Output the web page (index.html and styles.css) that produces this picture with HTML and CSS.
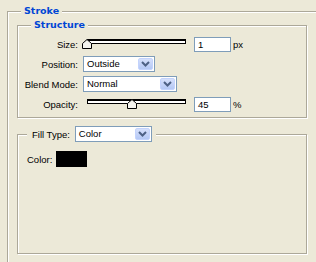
FILE: index.html
```html
<!DOCTYPE html>
<html>
<head>
<meta charset="utf-8">
<link rel="stylesheet" href="styles.css">
</head>
<body>
<fieldset class="grp outer">
  <legend class="title">Stroke</legend>
  <fieldset class="grp inner">
    <legend class="title">Structure</legend>
    <div class="row">
      <span class="lbl">Size:</span>
      <div class="slider"><span class="track"></span><svg class="thumb" style="left:0px" width="10" height="10" viewBox="0 0 10 10"><path d="M0.5 9.5 V4.5 L5 0.5 L9.5 4.5 V9.5 Z" fill="#f4f3ee" stroke="#000"/></svg></div>
      <span class="num">1</span>
      <span class="unit">px</span>
    </div>
    <div class="row">
      <span class="lbl">Position:</span>
      <span class="select sel-pos"><span class="val">Outside</span><span class="btn"><svg width="9" height="6" viewBox="0 0 9 6"><polyline points="1,1 4.5,4.5 8,1" fill="none" stroke="#4d6185" stroke-width="2"/></svg></span></span>
    </div>
    <div class="row">
      <span class="lbl">Blend Mode:</span>
      <span class="select sel-blend"><span class="val">Normal</span><span class="btn"><svg width="9" height="6" viewBox="0 0 9 6"><polyline points="1,1 4.5,4.5 8,1" fill="none" stroke="#4d6185" stroke-width="2"/></svg></span></span>
    </div>
    <div class="row">
      <span class="lbl">Opacity:</span>
      <div class="slider"><span class="track"></span><svg class="thumb" style="left:44.5px" width="10" height="10" viewBox="0 0 10 10"><path d="M0.5 9.5 V4.5 L5 0.5 L9.5 4.5 V9.5 Z" fill="#f4f3ee" stroke="#000"/></svg></div>
      <span class="num">45</span>
      <span class="unit">%</span>
    </div>
  </fieldset>
  <fieldset class="grp inner fill">
    <legend class="fill-legend"><span class="fl-wrap"><span class="fl-lbl">Fill Type:</span><span class="select sel-fill"><span class="val">Color</span><span class="btn"><svg width="9" height="6" viewBox="0 0 9 6"><polyline points="1,1 4.5,4.5 8,1" fill="none" stroke="#4d6185" stroke-width="2"/></svg></span></span></span></legend>
    <div class="fill-body">
      <div class="color-row"><span>Color:</span><span class="swatch"></span></div>
    </div>
  </fieldset>
</fieldset>
</body>
</html>
```
FILE: styles.css
```css
html, body {
  margin: 0;
  padding: 0;
  overflow: hidden;
}
body {
  width: 316px;
  height: 262px;
  background: #ece9d8;
  font-family: "Liberation Sans", Arial, sans-serif;
  font-size: 9.5px;
  color: #000;
}
.grp {
  margin: 0;
  padding: 0;
  min-width: 0;
  border: 1px solid #aca899;
  box-shadow: inset 1px 1px 0 #fff, 1px 1px 0 #fff;
  box-sizing: border-box;
}
.outer {
  margin: 5px 0 0 7px;
  width: 309px;
  height: 257px;
  border-right: none;
  border-bottom: none;
  box-shadow: inset 1px 1px 0 #fff;
}
.title {
  margin-left: 13px;
  padding: 0 3px;
  background: #ece9d8;
  font-family: "DejaVu Sans", sans-serif;
  font-weight: bold;
  font-size: 9.5px;
  line-height: 12px;
  color: #0046d5;
}
.inner {
  margin: 2px 0 0 9px;
  width: 290px;
  padding: 3px 0 3px 0;
}
.row {
  display: flex;
  align-items: center;
  height: 20px;
}
.lbl {
  width: 60px;
  text-align: right;
  flex: none;
}
.slider {
  position: relative;
  width: 109px;
  height: 20px;
  margin-left: 4px;
  flex: none;
}
.track {
  display: block;
  margin: 5px 5px 0 5px;
  height: 2px;
  border: 1px solid #000;
  border-top-width: 2px;
  background: #fff;
}
.thumb {
  position: absolute;
  top: 5px;
  display: block;
}
.num {
  margin-left: 3px;
  width: 37px;
  height: 15px;
  box-sizing: border-box;
  border: 1px solid #7f9db9;
  background: #fff;
  padding-left: 3px;
  line-height: 13px;
  flex: none;
}
.unit {
  margin-left: 2px;
}
.select {
  display: flex;
  align-items: center;
  height: 16px;
  box-sizing: border-box;
  border: 1px solid #7f9db9;
  background: #fff;
  flex: none;
}
.sel-pos, .sel-blend {
  margin-left: 5px;
}
.sel-pos { width: 72px; }
.sel-blend { width: 94px; }
.sel-fill { width: 77px; margin-left: 5px; }
.val {
  flex: 1;
  padding-left: 3px;
  line-height: 14px;
}
.btn {
  width: 15px;
  height: 12px;
  box-sizing: border-box;
  margin-right: 1px;
  border: 1px solid #c3d3fd;
  border-radius: 2px;
  background: linear-gradient(#d6e0fb, #b4c8f5);
  display: flex;
  align-items: center;
  justify-content: center;
}
.btn svg { display: block; }
.fill {
  margin-top: 8px;
  padding: 0;
}
.fill-legend {
  margin-left: 9px;
  padding: 0 4px 0 5px;
  background: #ece9d8;
}
.fl-wrap {
  display: flex;
  align-items: center;
  height: 16px;
}
.fill-body {
  height: 111px;
  box-sizing: border-box;
  padding: 9px 0 0 9px;
}
.color-row {
  display: flex;
  align-items: center;
}
.swatch {
  margin-left: 4px;
  width: 31px;
  height: 16px;
  background: #000;
}
```
